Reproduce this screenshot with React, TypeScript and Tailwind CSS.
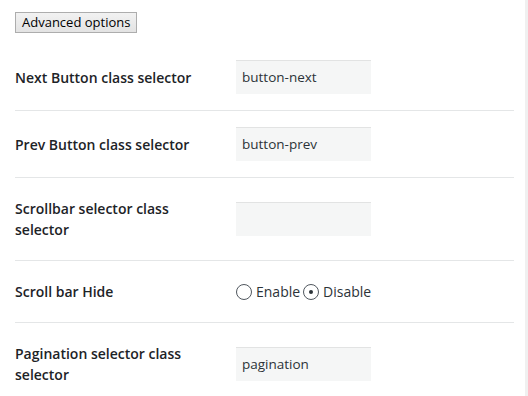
import React from "react";

const font = { fontFamily: '"Open Sans", "Noto Sans", sans-serif' };

function TextRow({ label, value }: { label: string; value: string }) {
  return (
    <div className="flex items-center border-b border-[#e4e6e7]">
      <div className="w-[221px] shrink-0 py-5 pr-5 text-[14px] font-[560] leading-[21px] text-[#1d2327]">
        {label}
      </div>
      <div className="py-4">
        <div className="h-[34px] w-[135px] bg-[#f5f6f6] border-t border-[#e2e3e3] px-[6px] flex items-center text-[13.5px] text-[#2c3338]">
          {value}
        </div>
      </div>
    </div>
  );
}

function Radio({ checked, label }: { checked?: boolean; label: string }) {
  return (
    <label className="flex items-center">
      <span className="w-4 h-4 rounded-full border border-[#50575e] bg-white flex items-center justify-center">
        {checked && <span className="w-1 h-1 rounded-full bg-[#2c3338]" />}
      </span>
      <span className="ml-[4px] text-[14px] text-[#2c3338]">{label}</span>
    </label>
  );
}

export default function App() {
  return (
    <div className="flex w-[528px] h-[396px] overflow-hidden bg-white" style={font}>
      <div className="flex-1 pl-[15px] pr-[11px]">
        <div className="pt-[9px]">
          <button className="h-[21px] px-[6px] border border-[#adadad] bg-gradient-to-b from-[#f2f2f2] to-[#e3e3e3] text-[13px] leading-none text-black">
            Advanced options
          </button>
        </div>
        <div className="mt-[11px]">
          <TextRow label="Next Button class selector" value="button-next" />
          <TextRow label="Prev Button class selector" value="button-prev" />
          <TextRow label="Scrollbar selector class selector" value="" />
          <div className="flex items-center border-b border-[#e4e6e7]">
            <div className="w-[221px] shrink-0 py-5 pr-5 text-[14px] font-[560] leading-[21px] text-[#1d2327]">
              Scroll bar Hide
            </div>
            <div className="flex items-center gap-[3px]">
              <Radio label="Enable" />
              <Radio checked label="Disable" />
            </div>
          </div>
          <TextRow label="Pagination selector class selector" value="pagination" />
        </div>
      </div>
      <div className="w-[3px] bg-[#f0f0f0]" />
    </div>
  );
}
